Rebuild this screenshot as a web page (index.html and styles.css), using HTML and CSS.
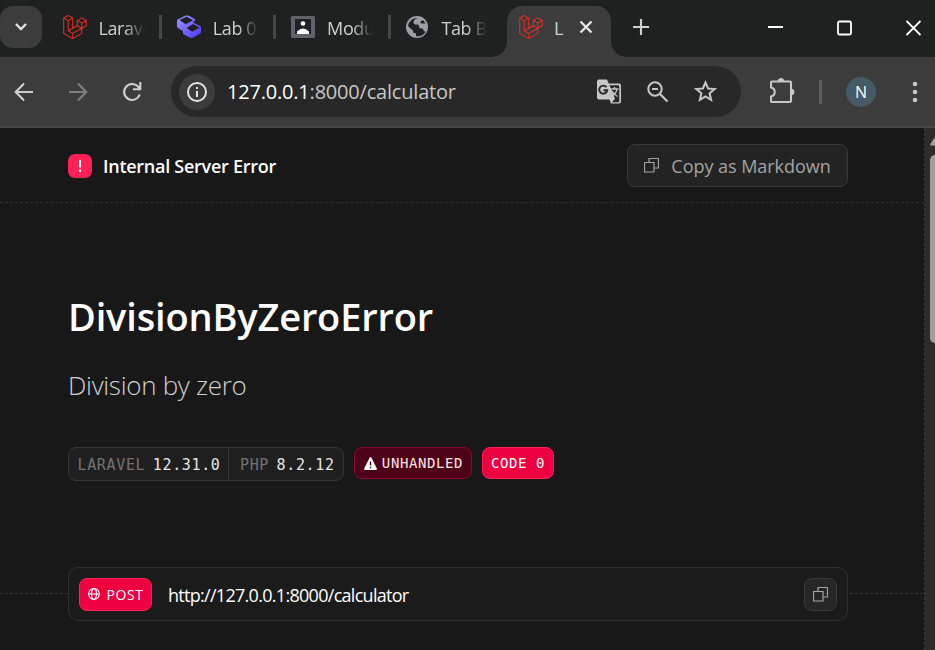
FILE: index.html
```html
<!DOCTYPE html>
<html lang="en">
<head>
<meta charset="utf-8">
<title>Internal Server Error</title>
<link rel="stylesheet" href="styles.css">
</head>
<body>
<svg class="defs" width="0" height="0" aria-hidden="true">
  <symbol id="laravel" viewBox="0 0 24 24"><path d="M.7 3 5.2.5 9.7 3 5.2 5.6zM.7 3v15.4l9 5.2 9.1-5.2v-5.1l4.5-2.6V5.500l-4.500-2.600-4.500 2.600v5.200l-9.100 5.100V5.600M9.700 3v10.300M14.300 5.500l4.500 2.600 4.500-2.600M18.800 8.100v5.200l-4.500-2.600M5.200 15.800l4.500 2.600 9.100-5.100M9.700 18.400v5.200" fill="none" stroke="#e02b22" stroke-width="1.050" stroke-linejoin="round"/></symbol>
  <symbol id="copy" viewBox="0 0 15 15"><path d="M5 4.500V.5h9.500V10H10.500M.5 4.500h9.500v9.500H.5z" fill="none" stroke="currentColor" stroke-width="1.200"/></symbol>
</svg>

<header class="tabstrip">
  <button class="tab-search"><svg width="14" height="10" viewBox="0 0 14 10"><path d="m2 2 5 5 5-5" fill="none" stroke="#e3e3e3" stroke-width="2.300"/></svg></button>
  <nav class="tabs">
    <div class="tab"><svg class="favicon" width="24" height="24"><use href="#laravel"/></svg><span class="tab-title">Laravel</span></div>
    <div class="tab"><svg class="favicon" width="24" height="24" viewBox="0 0 24 24">
      <defs><linearGradient id="lab" x2="1" y2="1"><stop stop-color="#9d98ff"/><stop offset="1" stop-color="#4837ff"/></linearGradient></defs>
      <path d="M0 6Q0 4.800 1 4.300L8 .8Q10 0 12 .8l5.500 3Q19 4.800 17.600 6l-2 1.300L23 11q1 .500 1 1.500V17q0 1-1 1.600l-6.500 4q-2 .900-4 0L7 19.500q-1-.600-1-1.600v-2L1 13q-1-.600-1-1.600z" fill="url(#lab)"/>
      <path d="m2.500 5 7-3.300L16 5.300 8.700 9.200zM9.500 13l6.700-4 6.300 3.700-7.300 4z" fill="#1f2020"/></svg><span class="tab-title">Lab 02</span></div>
    <div class="tab"><svg class="favicon module-icon" width="24" height="22" viewBox="0 0 24 22"><rect width="24" height="22" rx="1.500" fill="#5f6368"/><path d="M4 3h16v15H4z" fill="#202124"/><circle cx="12" cy="7.500" r="2.300" fill="#fff"/><path d="M6 18v-2.500q6-6 12 0V18z" fill="#fff"/></svg><span class="tab-title">Module</span></div>
    <div class="tab"><svg class="favicon" width="24" height="24" viewBox="0 0 24 24"><circle cx="11" cy="12" r="11" fill="#9aa0a6"/><path d="M12 3Q7.500 4 7.500 7.500q0 2 2 2h2q1.500 0 1.500 2t2 2h1q1.500 0 1.500 1.500t1.500 1.500l1-.5A9.500 9.500 0 0 1 10 21.200V19q0-1-1.500-1T7 16.500v-1L2 11.200A9.200 9.200 0 0 1 12 3zM19.500 8.500H16q-1.500 0-1.500-1.500t1.500-1.500h1.500z" fill="#1f2020"/></svg><span class="tab-title">Tab Bar</span></div>
    <div class="tab tab-active"><svg class="favicon" width="24" height="24"><use href="#laravel"/></svg><span class="tab-title">L</span><svg class="tab-close" width="14" height="14" viewBox="0 0 14 14"><path d="m1.500 1.500 11 11M12.500 1.500l-11 11" stroke="#e8e8e8" stroke-width="2.300"/></svg></div>
  </nav>
  <svg class="new-tab" width="16" height="16" viewBox="0 0 16 16"><path d="M8 0v16M0 8h16" stroke="#d0d0d0" stroke-width="2.100"/></svg>
  <div class="window-controls">
    <svg width="15" height="16" viewBox="0 0 15 16"><path d="M0 7h15" stroke="#fff" stroke-width="2"/></svg>
    <svg width="15" height="16" viewBox="0 0 15 16"><rect x="1" y="1.500" width="13" height="13" rx="1.500" fill="none" stroke="#fff" stroke-width="1.800"/></svg>
    <svg width="15" height="16" viewBox="0 0 15 16"><path d="m.5 1 14 14M14.500 1l-14 14" stroke="#fff" stroke-width="1.900"/></svg>
  </div>
</header>

<div class="toolbar">
  <div class="nav-buttons">
    <svg width="20" height="20" viewBox="0 0 20 20"><path d="M19 10H2M10 1.500 1.700 10l8.300 8.500" fill="none" stroke="#d0d0d0" stroke-width="2.100"/></svg>
    <svg width="20" height="20" viewBox="0 0 20 20"><path d="M1 10h17M10 1.500l8.300 8.500-8.300 8.500" fill="none" stroke="#7e7e7e" stroke-width="2.100"/></svg>
    <svg width="20" height="20" viewBox="0 0 20 20"><path d="M17.700 12.500A8 8 0 1 1 16 4.500l2 2M18.300 0v7.200H11" fill="none" stroke="#d0d0d0" stroke-width="2.100"/></svg>
  </div>
  <div class="address">
    <span class="site-info"><svg width="20" height="20" viewBox="0 0 20 20"><circle cx="10" cy="10" r="9" fill="none" stroke="#e3e3e3" stroke-width="2"/><path d="M10 9v6M10 5v2" stroke="#e3e3e3" stroke-width="2"/></svg></span>
    <span class="url"><b>127.0.0.1</b>:8000/calculator</span>
    <div class="address-actions">
      <svg width="25" height="26" viewBox="0 0 25 26"><path d="M2 .5h8l1.700 4H22q2 0 2 2v16q0 2-2 2h-8l-1.500-4H2q-2 0-2-2v-16q0-2 2-2z" fill="#c7c7c7"/><path d="M12.500 6.300H21q1.300 0 1.300 1.300V22q0 1.200-1.300 1.200h-6l3-3.500z" fill="#282828"/><path d="M13.500 10h8M17.500 8v2M20 10c-.5 3-3 6-5 7M15 12c1 2 3 4 5.500 5.500" fill="none" stroke="#c7c7c7" stroke-width="1.400"/><path d="M9.500 8.300A4 4 0 1 0 10.200 11.300H6.500" fill="none" stroke="#282828" stroke-width="1.900"/></svg>
      <svg width="22" height="22" viewBox="0 0 22 22"><circle cx="8" cy="8" r="6.700" fill="none" stroke="#c7c7c7" stroke-width="2"/><path d="m13 13 7.500 7.500M5 8h6" stroke="#c7c7c7" stroke-width="2.200"/></svg>
      <svg width="23" height="23" viewBox="0 0 23 23"><path d="m11.500 2.500 2.600 6 6.500.6-5 4.200 1.500 6.500-5.600-3.400-5.600 3.400 1.500-6.500-5-4.200 6.500-.6z" fill="none" stroke="#c7c7c7" stroke-width="2"/></svg>
    </div>
  </div>
  <svg class="extensions" width="25" height="26" viewBox="0 0 25 26"><path d="M3 3.500h17q1 0 1 1V23q0 1-1 1H2q-1 0-1-1v-4.500c5-1 5-8 0-9v-5q0-1 1-1z" fill="none" stroke="#c7c7c7" stroke-width="2.100"/><path d="M8 3.500a3 3 0 0 1 6 0zM21 11a3 3 0 0 1 0 6z" fill="#c7c7c7" stroke="#c7c7c7"/></svg>
  <i class="toolbar-divider"></i>
  <span class="avatar">N</span>
  <svg class="menu" width="6" height="22" viewBox="0 0 6 22"><path d="M3 3h0M3 11h0M3 19h0" stroke="#c7c7c7" stroke-width="4.500" stroke-linecap="round"/></svg>
</div>

<div class="viewport">
  <main class="page">
    <section class="page-header">
      <span class="alert"><svg width="4" height="12" viewBox="0 0 4 12"><path d="M2 0v7.500M2 9.500V12" stroke="#fff" stroke-width="2"/></svg></span>
      <h2>Internal Server Error</h2>
      <button class="copy-markdown"><svg width="15" height="15"><use href="#copy"/></svg><span>Copy as Markdown</span></button>
    </section>
    <section class="summary">
      <h1><span>DivisionByZeroError</span></h1>
      <p><span>Division by zero</span></p>
      <div class="badges">
        <div class="versions"><div class="version"><span>LARAVEL</span><b>12.31.0</b></div><div class="version"><span>PHP</span><b>8.2.12</b></div></div>
        <div class="badge unhandled"><svg width="13" height="13" viewBox="0 0 13 13"><path d="M6.500 1 12 12H1z" fill="#fff" stroke="#fff" stroke-width="1.800" stroke-linejoin="round"/><path d="M6.500 4.500v4M6.500 9.700v1.500" stroke="#4d0218" stroke-width="1.400"/></svg><span>UNHANDLED</span></div>
        <div class="badge code"><span>CODE 0</span></div>
      </div>
    </section>
    <section class="request">
      <div class="request-bar">
        <div class="badge method"><svg width="12" height="12" viewBox="0 0 12 12"><g fill="none" stroke="#fff" stroke-width="1.100"><circle cx="6" cy="6" r="5.400"/><ellipse cx="6" cy="6" rx="2.500" ry="5.400"/><path d="M.5 6h11"/></g></svg><span>POST</span></div>
        <span class="request-url">http://127.0.0.1:8000/calculator</span>
        <button class="copy-url"><svg width="15" height="15"><use href="#copy"/></svg></button>
      </div>
    </section>
  </main>
  <aside class="scrollbar"><svg width="5" height="9" viewBox="0 0 5 9"><path d="M5 0 .3 7q-.5 1.500 1 1.500H5z" fill="#9f9f9f"/></svg><div class="thumb"></div></aside>
</div>
</body>
</html>
```
FILE: styles.css
```css
* { box-sizing: border-box; }
body { margin: 0; width: 935px; height: 650px; overflow: hidden; background: #181818; color: #fff; font-family: "Open Sans", "Noto Sans", sans-serif; }
svg { display: block; flex: none; }
.defs { position: absolute; }
button { font: inherit; color: inherit; border: 0; padding: 0; display: flex; align-items: center; justify-content: center; }
span, b { white-space: nowrap; }

.tabstrip { height: 57px; background: #1f2120; display: flex; align-items: flex-start; }
.tab-search { width: 42px; height: 42px; margin-top: 6px; background: #3c3c3c; border-radius: 13px; }
.tabs { display: flex; margin-left: 6px; }
.tab { display: flex; width: 114.300px; height: 57px; padding: 15px 0 0 15px; align-items: flex-start; background: linear-gradient(#454746, #454746) no-repeat 111px 15px / 3px 24px; }
.tab:nth-child(4) { width: 116px; background: none; }
.tab-title { margin-left: 11.500px; width: 46px; overflow: hidden; font-size: 18px; line-height: 26px; color: #d0d0d0; letter-spacing: -.4px; -webkit-mask-image: linear-gradient(90deg, #000 55%, transparent); mask-image: linear-gradient(90deg, #000 55%, transparent); }
.module-icon { margin: 1px 1px 0 -1px; }
.tab-active { position: relative; width: 104px; height: 51px; margin-top: 6px; padding: 9px 0 0 12px; background: #3c3c3c; border-radius: 15px 15px 0 0; }
.tab-active::before, .tab-active::after { content: ""; position: absolute; bottom: 0; width: 15px; height: 15px; }
.tab-active::before { left: -15px; background: radial-gradient(circle at 0 0, transparent 14.500px, #3c3c3c 15px); }
.tab-active::after { right: -15px; background: radial-gradient(circle at 100% 0, transparent 14.500px, #3c3c3c 15px); }
.tab-active .tab-title { width: 9px; margin-left: 11px; overflow: visible; -webkit-mask-image: none; mask-image: none; }
.tab-close { margin: 5px 0 0 16px; }
.new-tab { margin: 19px 0 0 22px; }
.window-controls { display: flex; margin: 20px 14px 0 auto; gap: 54px; }

.toolbar { height: 71px; background: #3c3c3c; border-bottom: 2px solid #474747; display: flex; align-items: center; }
.nav-buttons { display: flex; gap: 34px; width: 156px; padding-left: 14px; }
.address { width: 570px; height: 51px; margin-left: 15px; border-radius: 26px; background: #282828; display: flex; align-items: center; padding-left: 8px; }
.site-info { width: 36px; height: 36px; border-radius: 50%; background: #3c3c3c; display: grid; place-items: center; }
.url { margin-left: 12px; color: #c7c7c7; font-size: 20px; letter-spacing: -.2px; }
.url b { font-weight: 400; color: #fff; }
.address-actions { display: flex; align-items: center; gap: 25px; margin: 0 24px 0 auto; }
.extensions { margin-left: 29px; margin-top: -2px; }
.toolbar-divider { width: 3px; height: 24px; border-radius: 1px; background: #5e5e5e; margin-left: 24px; }
.avatar { width: 30px; height: 30px; margin-left: 24px; border-radius: 50%; background: #455a64; display: grid; place-items: center; font-size: 16px; }
.menu { margin-left: 36px; }

.viewport { height: 522px; display: flex; }
.page { width: 925px; border-right: 1px dashed #3b3b3b; background: #181818; }
.page-header { height: 75px; border-bottom: 1px dashed #303030; padding: 2px 76px 0 68px; display: flex; align-items: center; }
.alert { width: 24px; height: 24px; border-radius: 7px; background: #ff2056; display: grid; place-items: center; }
h2 { margin: 0 0 0 11px; font-size: 18px; font-weight: 600; letter-spacing: -.27px; white-space: nowrap; }
.copy-markdown { width: 221px; height: 43px; margin: -1px 0 0 auto; background: #232323; border: 1px solid #393939; border-radius: 8px; color: #a3a3a3; gap: 12px; font-size: 18px; letter-spacing: -.04px; }
.summary { height: 364px; padding: 83px 0 0 68px; }
h1 { margin: 0; font-size: 38px; line-height: 60px; font-weight: 600; letter-spacing: -.17px; }
p { margin: 21px 0 0; font-size: 26px; line-height: 36px; font-weight: 300; color: #d0d0d0; letter-spacing: -.3px; }
.badges { display: flex; margin-top: 44px; gap: 10px; align-items: flex-start; font-family: "DejaVu Sans Mono", monospace; }
.versions { width: 276px; height: 34px; display: flex; border: 1px solid #363636; border-radius: 8px; background: #1f1f1f; font-size: 15px; letter-spacing: .65px; }
.version { display: flex; align-items: center; padding: 2px 0 0 8.500px; gap: 7.500px; }
.version:first-child { width: 160px; border-right: 1px solid #363636; }
.version + .version { padding-left: 11px; }
.version span { color: #737373; }
.version b { font-weight: 400; color: #e5e5e5; }
.badge { display: flex; align-items: center; justify-content: center; height: 32px; border-radius: 8px; border: 1px solid #8b0836; background: #4d0218; font-size: 14px; letter-spacing: .6px; }
.unhandled { width: 118px; padding-left: 1px; gap: 5px; color: #ffe4e6; }
.code { width: 72px; background: #ec003f; border-color: #ff2056; }
.request { height: 53px; padding: 0 76px 0 68px; background: repeating-linear-gradient(90deg, #303030 0 3px, transparent 3px 5px) no-repeat 0 26px / 100% 1px; }
.request-bar { height: 54px; border: 1px solid #303030; border-radius: 10px; background: #1b1b1b; display: flex; align-items: center; padding: 0 10px; }
.method { width: 73px; height: 33px; gap: 6px; padding-left: 1px; background: #ec003f; border-color: #ff2056; }
.request-url { margin: 2px 0 0 16px; font-size: 18px; letter-spacing: -.71px; }
.copy-url { width: 33px; height: 33px; margin-left: auto; background: #262626; border: 1px solid #393939; border-radius: 8px; color: #a3a3a3; }
.scrollbar { flex: 1; background: #2c2c2c; padding: 9px 0 0 5px; }
.thumb { width: 5px; height: 188px; margin-top: 9px; background: #9f9f9f; border-radius: 5px 0 0 5px; }
```
